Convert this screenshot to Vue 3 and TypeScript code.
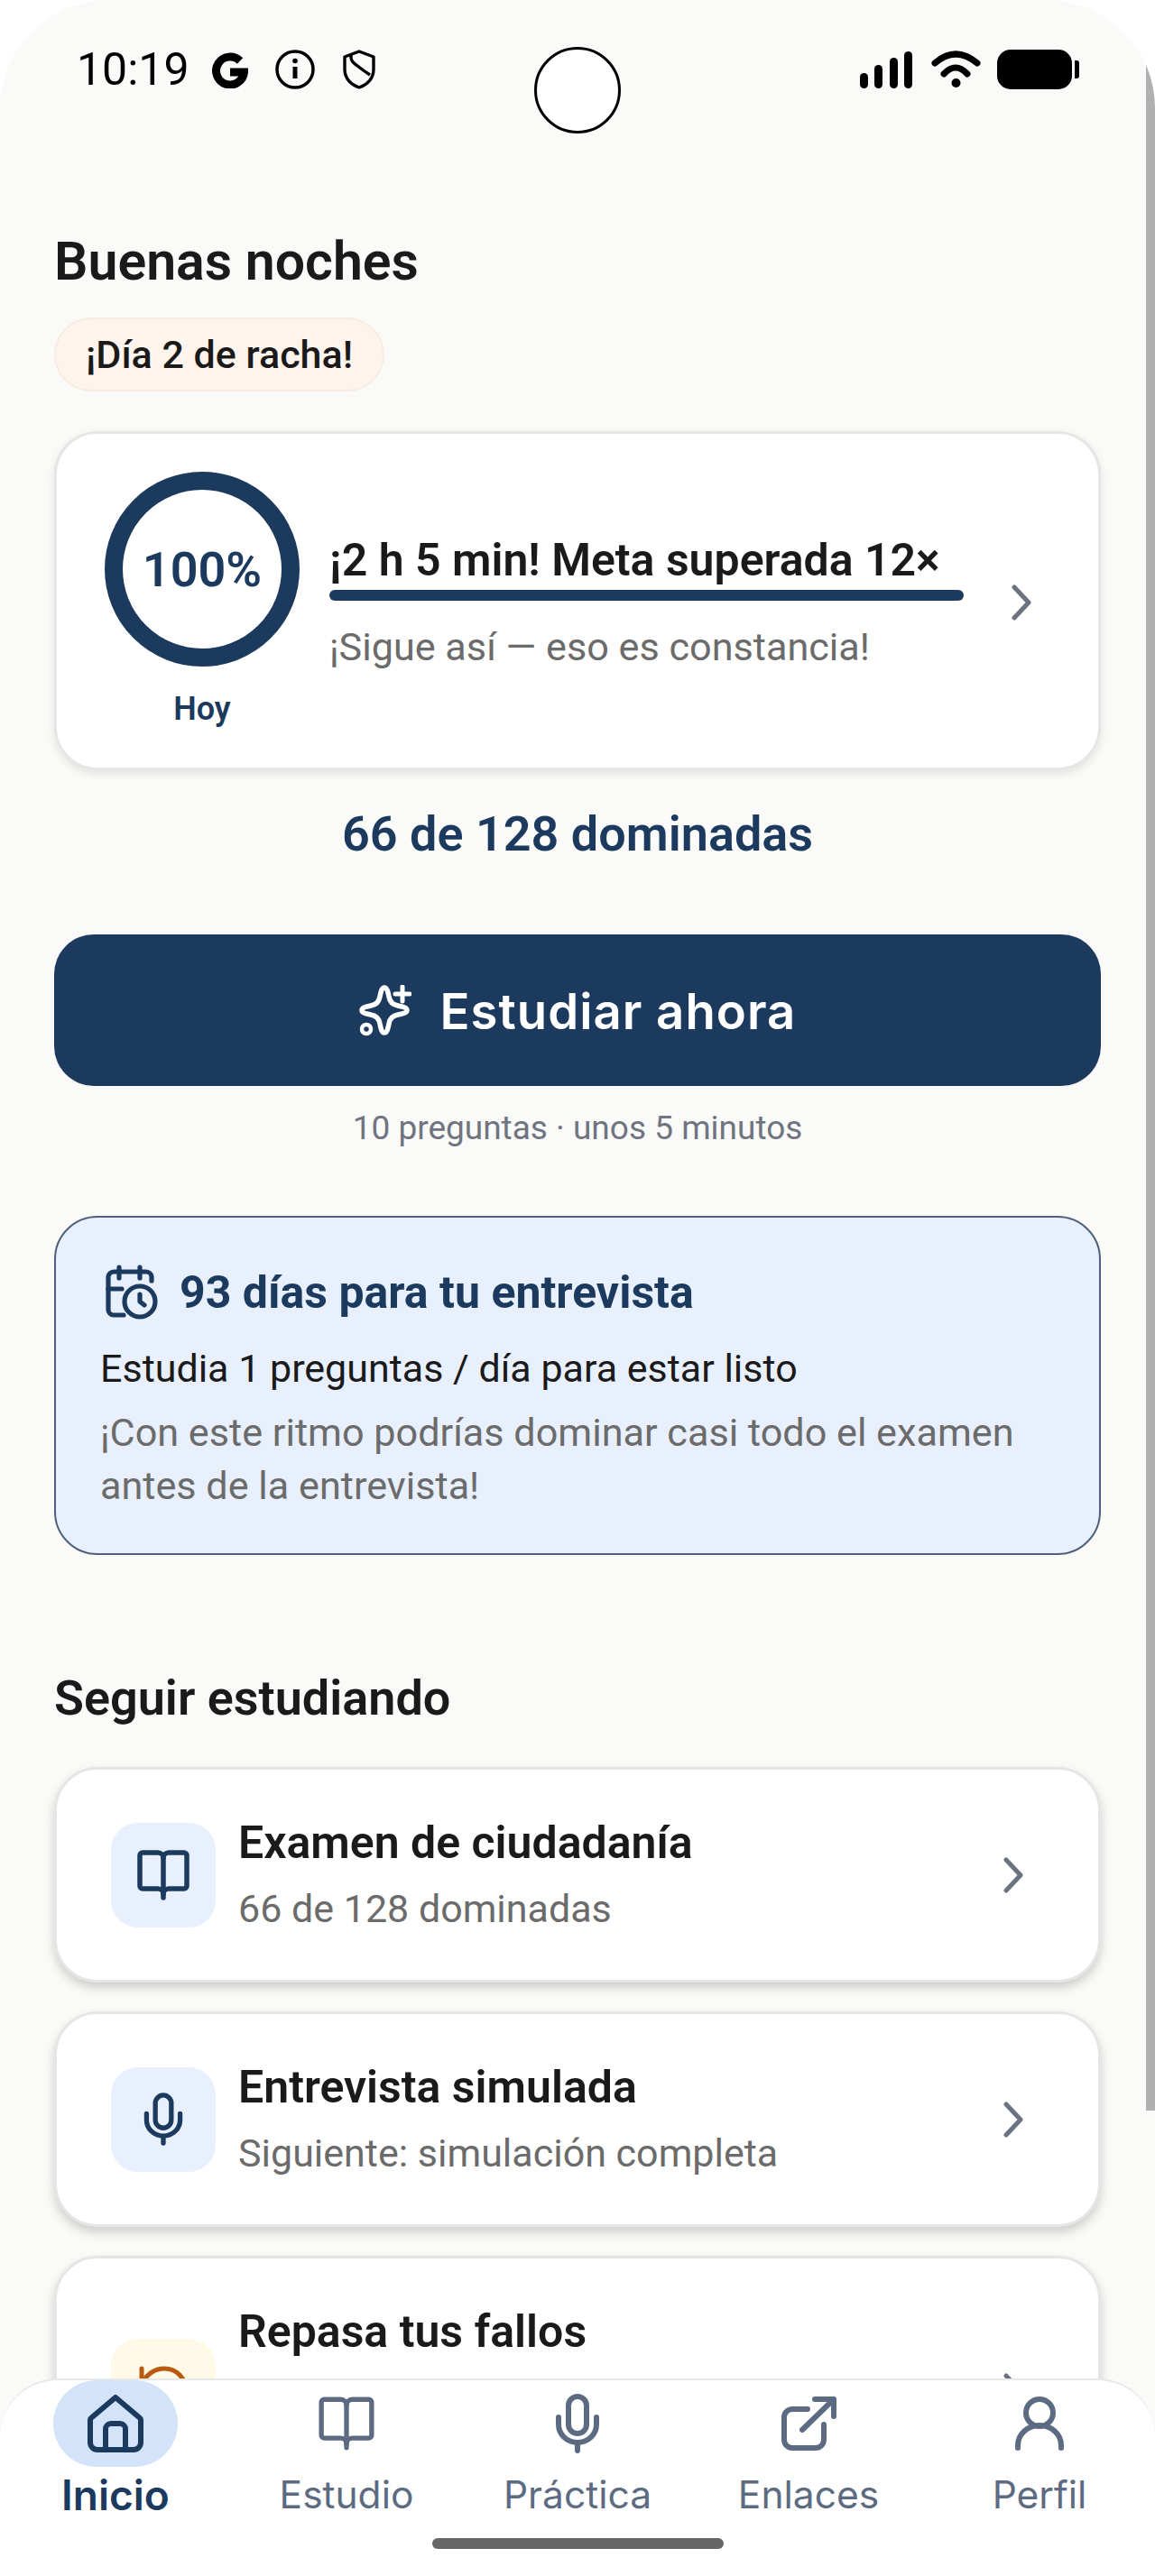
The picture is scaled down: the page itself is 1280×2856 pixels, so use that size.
<script setup lang="ts">
interface StudyRow {
  title: string;
  sub: string;
  icon: "book" | "mic" | "undo";
  warm?: boolean;
}

const rows: StudyRow[] = [
  { title: "Examen de ciudadanía", sub: "66 de 128 dominadas", icon: "book" },
  { title: "Entrevista simulada", sub: "Siguiente: simulación completa", icon: "mic" },
  { title: "Repasa tus fallos", sub: "Preguntas que fallaste", icon: "undo", warm: true },
];

const tabs = [
  { label: "Inicio", icon: "home", active: true },
  { label: "Estudio", icon: "book", active: false },
  { label: "Práctica", icon: "mic", active: false },
  { label: "Enlaces", icon: "link", active: false },
  { label: "Perfil", icon: "person", active: false },
];
</script>

<template>
  <div class="screen">
    <div class="scroll-thumb"></div>
    <div class="camera"></div>

    <header class="status">
      <div class="status-left">
        <span class="clock">10:19</span>
        <svg class="st-g" viewBox="0 0 40 40" fill="none" stroke="#000" stroke-width="9">
          <path d="M31 9.5A15.5 15.5 0 1 0 35.5 22H20" />
        </svg>
        <svg class="st-info" viewBox="0 0 44 44" fill="none" stroke="#000" stroke-width="3.5">
          <circle cx="22" cy="22" r="20" />
          <path d="M22 19v13" stroke-width="5" />
          <circle cx="22" cy="12.5" r="2.8" fill="#000" stroke="none" />
        </svg>
        <svg class="st-shield" viewBox="0 0 36 44" fill="none" stroke="#000" stroke-width="3.4" stroke-linejoin="round">
          <path d="M18 2l16 6v14c0 10-7 17-16 20C9 39 2 32 2 22V8z" />
          <path d="M9 6c-1 8 5 10 11 15 4 3 7 5 10 7" />
        </svg>
      </div>
      <div class="status-right">
        <div class="signal">
          <span class="b1"></span><span class="b2"></span><span class="b3"></span><span class="b4"></span>
        </div>
        <svg class="st-wifi" viewBox="0 0 56 42" fill="none" stroke="#000" stroke-width="7" stroke-linecap="round">
          <path d="M5 14Q28-6 52 14" />
          <path d="M15 26Q28 12 41 26" />
          <circle cx="28.5" cy="36" r="5" fill="#000" stroke="none" />
        </svg>
        <div class="battery"><span class="battery-tip"></span></div>
      </div>
    </header>

    <main class="content">
      <h1 class="greeting">Buenas noches</h1>
      <div class="streak">¡Día 2 de racha!</div>

      <section class="card goal-card">
        <div class="ring-col">
          <div class="ring">100%</div>
          <div class="ring-label">Hoy</div>
        </div>
        <div class="goal-info">
          <div class="goal-title">¡2 h 5 min! Meta superada 12×</div>
          <div class="goal-bar"></div>
          <div class="goal-sub">¡Sigue así — eso es constancia!</div>
        </div>
        <svg class="chevron goal-chevron" viewBox="0 0 22 40" fill="none" stroke="#6b7280" stroke-width="5" stroke-linecap="round" stroke-linejoin="round">
          <path d="M3 3l16 17L3 37" />
        </svg>
      </section>

      <div class="mastered">66 de 128 dominadas</div>

      <button class="cta">
        <svg class="cta-icon" viewBox="0 0 58 58" fill="none" stroke="#fff" stroke-width="5.5" stroke-linecap="round">
          <path d="M28 3c3 0 4 5 5 10 1 6 4 9 10 10 5 1 10 2 10 5s-5 4-10 5c-6 1-9 4-10 10-1 5-2 10-5 10s-4-5-5-10c-1-6-4-9-10-10-5-1-10-2-10-5s5-4 10-5c6-1 9-4 10-10 1-5 2-10 5-10z" />
          <path d="M48 2v16M40 10h16" stroke-width="5" />
          <circle cx="8" cy="49" r="5" stroke-width="4.5" />
        </svg>
        <span>Estudiar ahora</span>
      </button>
      <div class="cta-note">10 preguntas · unos 5 minutos</div>

      <section class="plan">
        <div class="plan-head">
          <svg class="plan-icon" viewBox="0 0 60 62" fill="none" stroke="#1c3a5e" stroke-width="5.2" stroke-linecap="round" stroke-linejoin="round">
            <path d="M52 18v-4a6 6 0 0 0-6-6H10a6 6 0 0 0-6 6v36a6 6 0 0 0 6 6h11" />
            <path d="M16 3v12M39 3v12M4 27h15" />
            <circle cx="39" cy="41" r="17" />
            <path d="M39 33v8l5 4" />
          </svg>
          <span class="plan-title">93 días para tu entrevista</span>
        </div>
        <div class="plan-line">Estudia 1 preguntas / día para estar listo</div>
        <div class="plan-note">¡Con este ritmo podrías dominar casi todo el examen antes de la entrevista!</div>
      </section>

      <h2 class="section-title">Seguir estudiando</h2>
      <div class="rows">
        <section v-for="row in rows" :key="row.title" class="card row" :class="{ tall: row.warm }">
          <div class="row-icon" :class="{ warm: row.warm }">
            <svg v-if="row.icon === 'book'" class="ri-book" viewBox="0 0 60 56" fill="none" stroke="#1c3a5e" stroke-width="5.5" stroke-linecap="round" stroke-linejoin="round">
              <path d="M7 3h17a6 6 0 0 1 6 6 6 6 0 0 1 6-6h17a3 3 0 0 1 3 3v34a3 3 0 0 1-3 3H36a6 6 0 0 0-6 6 6 6 0 0 0-6-6H7a3 3 0 0 1-3-3V6a3 3 0 0 1 3-3z" />
              <path d="M30 9v44" />
            </svg>
            <svg v-else-if="row.icon === 'mic'" class="ri-mic" viewBox="0 0 52 66" fill="none" stroke="#1c3a5e" stroke-width="6" stroke-linecap="round">
              <rect x="16" y="3" width="20" height="41" rx="10" />
              <path d="M5 26v8a21 20 0 0 0 42 0v-8M26 54v9" />
            </svg>
            <svg v-else class="ri-undo" viewBox="0 0 58 56" fill="none" stroke="#b85a10" stroke-width="5" stroke-linecap="round" stroke-linejoin="round">
              <path d="M5 3v16h16" />
              <path d="M5 19C12 8 20 3 30 3c14 0 24 11 24 25S44 53 30 53c-8 0-16-3-21-9" />
            </svg>
          </div>
          <div class="row-text">
            <div class="row-title">{{ row.title }}</div>
            <div class="row-sub">{{ row.sub }}</div>
          </div>
          <svg class="chevron" viewBox="0 0 22 40" fill="none" stroke="#6b7280" stroke-width="5" stroke-linecap="round" stroke-linejoin="round">
            <path d="M3 3l16 17L3 37" />
          </svg>
        </section>
      </div>
    </main>

    <nav class="tabbar">
      <div v-for="tab in tabs" :key="tab.label" class="tab" :class="{ active: tab.active }">
        <div class="tab-icon">
          <svg v-if="tab.icon === 'home'" class="ti-home" viewBox="0 0 62 64" fill="none" stroke="#1c3a5e" stroke-width="6" stroke-linejoin="round">
            <path d="M31 3l26 22a4 4 0 0 1 2 3v25a8 8 0 0 1-8 8H11a8 8 0 0 1-8-8V28a4 4 0 0 1 2-3z" />
            <path d="M20 61V38a6 6 0 0 1 6-6h10a6 6 0 0 1 6 6v23" />
          </svg>
          <svg v-else-if="tab.icon === 'book'" class="ti-book" viewBox="0 0 60 56" fill="none" stroke="#5d6b82" stroke-width="5" stroke-linecap="round" stroke-linejoin="round">
            <path d="M7 3h17a6 6 0 0 1 6 6 6 6 0 0 1 6-6h17a3 3 0 0 1 3 3v34a3 3 0 0 1-3 3H36a6 6 0 0 0-6 6 6 6 0 0 0-6-6H7a3 3 0 0 1-3-3V6a3 3 0 0 1 3-3z" />
            <path d="M30 9v44" />
          </svg>
          <svg v-else-if="tab.icon === 'mic'" class="ti-mic" viewBox="0 0 52 66" fill="none" stroke="#5d6b82" stroke-width="6" stroke-linecap="round">
            <rect x="16" y="3" width="20" height="41" rx="10" />
            <path d="M5 26v8a21 20 0 0 0 42 0v-8M26 54v9" />
          </svg>
          <svg v-else-if="tab.icon === 'link'" class="ti-link" viewBox="0 0 64 64" fill="none" stroke="#5d6b82" stroke-width="6" stroke-linecap="round" stroke-linejoin="round">
            <path d="M31 16H14a9 9 0 0 0-9 9v25a9 9 0 0 0 9 9h26a9 9 0 0 0 9-9V33" />
            <path d="M25 39L60 5M39 5h21v19" />
          </svg>
          <svg v-else class="ti-person" viewBox="0 0 58 64" fill="none" stroke="#5d6b82" stroke-width="6" stroke-linecap="round">
            <circle cx="29" cy="20" r="15" />
            <path d="M5 59v-3a24 22 0 0 1 48 0v3" />
          </svg>
        </div>
        <div class="tab-label">{{ tab.label }}</div>
      </div>
      <div class="home-bar"></div>
    </nav>
  </div>
</template>

<style>
html,
body {
  background: #fff;
}
</style>

<style scoped>
.screen {
  position: relative;
  width: 1280px;
  height: 2856px;
  overflow: hidden;
  background: #fafaf8;
  border-radius: 120px 120px 0 0;
  font-family: Roboto, "Noto Sans", sans-serif;
  color: #1a1a1a;
}

.scroll-thumb {
  position: absolute;
  top: 0;
  right: 0;
  width: 10px;
  height: 2340px;
  background: #b0b0b0;
}

.camera {
  position: absolute;
  top: 52px;
  left: 592px;
  width: 96px;
  height: 96px;
  box-sizing: border-box;
  border: 3px solid #000;
  border-radius: 50%;
  background: #fff;
}

/* status bar */
.status {
  display: flex;
  justify-content: space-between;
  align-items: center;
  height: 44px;
  padding: 55px 92px 0 85px;
}

.status-left {
  display: flex;
  align-items: center;
}

.clock {
  font-size: 50px;
  line-height: 44px;
  color: #000;
  width: 150px;
}

.st-g {
  width: 40px;
  height: 40px;
  margin-top: 2px;
  margin-right: 30px;
}

.st-info {
  width: 44px;
  height: 44px;
  margin-right: 31px;
}

.st-shield {
  width: 36px;
  height: 44px;
}

.status-right {
  display: flex;
  align-items: center;
}

.signal {
  display: flex;
  align-items: flex-end;
  gap: 7.5px;
  height: 41px;
  margin-right: 20px;
}

.signal span {
  width: 9px;
  border-radius: 5px;
  background: #000;
}

.b1 { height: 17px; }
.b2 { height: 26px; }
.b3 { height: 34px; }
.b4 { height: 41px; }

.st-wifi {
  width: 56px;
  height: 42px;
  margin-right: 18px;
}

.battery {
  position: relative;
  width: 83px;
  height: 44px;
  border-radius: 15px;
  background: #000;
}

.battery-tip {
  position: absolute;
  top: 12px;
  left: 86px;
  width: 5px;
  height: 20px;
  border-radius: 0 3px 3px 0;
  background: #000;
}

/* page */
.content {
  padding: 153px 60px 0 60px;
}

.greeting {
  margin: 0;
  font-size: 59px;
  font-weight: 600;
  line-height: 76px;
}

.streak {
  width: 366px;
  height: 82px;
  margin-top: 24px;
  box-sizing: border-box;
  border: 2px solid #f7ece2;
  border-radius: 41px;
  background: #fff4ec;
  font-size: 43px;
  font-weight: 500;
  line-height: 78px;
  text-align: center;
}

.card {
  box-sizing: border-box;
  border: 3px solid #e6e6e4;
  border-radius: 48px;
  background: #fff;
  box-shadow: 0 4px 10px rgba(0, 0, 0, 0.1);
}

.goal-card {
  display: flex;
  align-items: flex-start;
  height: 376px;
  margin-top: 44px;
  padding: 42px 0 0 53px;
}

.ring-col {
  display: flex;
  flex-direction: column;
  align-items: center;
}

.ring {
  display: flex;
  align-items: center;
  justify-content: center;
  width: 216px;
  height: 216px;
  box-sizing: border-box;
  border: 20px solid #1c3a5e;
  border-radius: 50%;
  color: #1c3a5e;
  font-size: 54px;
  font-weight: 600;
}

.ring-label {
  margin-top: 24px;
  color: #1c3a5e;
  font-size: 36px;
  font-weight: 600;
  line-height: 46px;
}

.goal-info {
  width: 703px;
  margin-left: 33px;
  padding-top: 68px;
}

.goal-title {
  font-size: 50px;
  font-weight: 600;
  line-height: 60px;
  white-space: nowrap;
}

.goal-bar {
  height: 12px;
  margin-top: 3px;
  border-radius: 6px;
  background: #1c3a5e;
}

.goal-sub {
  margin-top: 24px;
  color: #6b6b6b;
  font-size: 43.2px;
  line-height: 56px;
  white-space: nowrap;
}

.chevron {
  flex: none;
  width: 22px;
  height: 40px;
}

.goal-chevron {
  margin-top: 125px;
  margin-left: 53px;
}

.mastered {
  margin-top: 36px;
  color: #1c3a5e;
  font-size: 54px;
  font-weight: 600;
  line-height: 70px;
  text-align: center;
}

.cta {
  display: flex;
  align-items: center;
  justify-content: center;
  gap: 32px;
  width: 1160px;
  height: 168px;
  margin: 76px 0 0;
  padding: 2px 0 0;
  border: 0;
  border-radius: 44px;
  background: #1c3a5e;
  color: #fff;
  font-family: Inter, Roboto, sans-serif;
  font-size: 54.5px;
  font-weight: 600;
  letter-spacing: 1px;
}

.cta-icon {
  width: 58px;
  height: 58px;
}

.cta-note {
  margin-top: 25px;
  color: #6f7480;
  font-size: 37px;
  line-height: 44px;
  text-align: center;
}

.plan {
  box-sizing: border-box;
  height: 376px;
  margin-top: 75px;
  padding: 52px 50px 0 49px;
  border: 2px solid #4f5f78;
  border-radius: 48px;
  background: #e8f0fe;
}

.plan-head {
  display: flex;
  align-items: center;
  gap: 23px;
  height: 62px;
  margin-left: 5px;
}

.plan-icon {
  width: 60px;
  height: 62px;
}

.plan-title {
  color: #1c3a5e;
  font-size: 50px;
  font-weight: 700;
}

.plan-line {
  margin-top: 25px;
  font-size: 43px;
  line-height: 56px;
}

.plan-note {
  margin-top: 14px;
  color: #6b6b6b;
  font-size: 43.2px;
  line-height: 59px;
}

.section-title {
  margin: 124px 0 0;
  font-size: 54px;
  font-weight: 600;
  line-height: 70px;
}

.rows {
  display: flex;
  flex-direction: column;
  gap: 32px;
  margin-top: 41px;
}

.row {
  display: flex;
  align-items: center;
  padding: 49px 0 49px 60px;
  box-shadow: 0 6px 12px rgba(0, 0, 0, 0.18);
}

.row.tall {
  min-height: 299px;
}

.row.tall .row-text {
  align-self: flex-start;
}

.row-icon {
  display: flex;
  flex: none;
  align-items: center;
  justify-content: center;
  width: 116px;
  height: 116px;
  border-radius: 30px;
  background: #e8f0fe;
}

.row-icon.warm {
  background: #fff9e8;
}

.ri-book {
  width: 60px;
  height: 56px;
}

.ri-mic {
  width: 46px;
  height: 59px;
}

.ri-undo {
  width: 58px;
  height: 56px;
}

.row-text {
  width: 848px;
  margin-left: 25px;
}

.row-title {
  font-size: 50px;
  font-weight: 600;
  line-height: 64px;
}

.row-sub {
  margin-top: 11px;
  color: #6b6b6b;
  font-size: 43px;
  line-height: 60px;
}

/* tab bar */
.tabbar {
  position: absolute;
  right: 0;
  bottom: 0;
  left: 0;
  display: grid;
  grid-template-columns: repeat(5, 1fr);
  height: 219px;
  box-sizing: border-box;
  border-top: 2px solid #e8e8e6;
  border-radius: 64px 64px 0 0;
  background: #fff;
  font-family: Inter, Roboto, sans-serif;
}

.tab {
  display: flex;
  flex-direction: column;
  align-items: center;
}

.tab-icon {
  display: flex;
  align-items: center;
  justify-content: center;
  width: 138px;
  height: 96px;
  border-radius: 48px;
}

.tab.active .tab-icon {
  background: #d3e3fa;
}

.ti-home {
  width: 62px;
  height: 64px;
}

.ti-book {
  width: 66px;
  height: 60px;
}

.ti-mic {
  width: 52px;
  height: 66px;
}

.ti-link {
  width: 64px;
  height: 64px;
}

.ti-person {
  width: 58px;
  height: 64px;
}

.tab-label {
  margin-top: 6px;
  color: #5d6b82;
  font-size: 42.5px;
  line-height: 50px;
}

.tab.active .tab-label {
  color: #1c3a5e;
  font-size: 46px;
  font-weight: 600;
}

.home-bar {
  position: absolute;
  bottom: 30px;
  left: 479px;
  width: 323px;
  height: 12px;
  border-radius: 6px;
  background: #666;
}
</style>
